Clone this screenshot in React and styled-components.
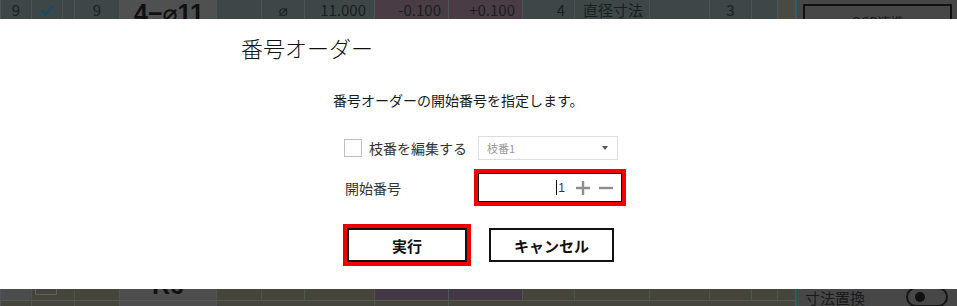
import React from 'react'
import styled, { createGlobalStyle } from 'styled-components'

const GlobalStyle = createGlobalStyle`
	html, body {
		margin: 0;
		padding: 0;
		background: #3e4747;
	}
	body {
		font-family: "Noto Sans CJK JP", "Noto Sans", "DejaVu Sans", sans-serif;
	}
`;

const Page = styled.div`
	width: 957px;
	height: 306px;
	overflow: hidden;
	display: flex;
	flex-direction: column;
`;

/* ---------- dimmed grid behind the dialog ---------- */

const Strip = styled.div`
	display: flex;
	height: ${props => props.$h}px;
	overflow: hidden;
	flex-shrink: 0;
`;

const Table = styled.div`
	display: flex;
	flex-direction: column;
	width: 796px;
	border-left: 1px solid #4f5858;
	box-sizing: border-box;
`;

const Row = styled.div`
	display: flex;
	height: ${props => props.$h}px;
	border-bottom: ${props => props.$line ? '1px solid #565a55' : 'none'};
	box-sizing: border-box;
`;

const Cell = styled.div`
	width: ${props => props.$w}px;
	flex-shrink: 0;
	display: flex;
	align-items: ${props => props.$valign || 'center'};
	justify-content: ${props => props.$align || 'center'};
	padding-left: ${props => props.$left || 0}px;
	padding-right: ${props => props.$right || 0}px;
	box-sizing: border-box;
	background: ${props => props.$bg || '#3e4747'};
	border-right: 1px solid #4d5656;
	color: #172020;
	font-size: 15px;
	line-height: 15px;
	white-space: nowrap;
	overflow: hidden;
`;

const BigText = styled.span`
	font-family: "Liberation Sans", "DejaVu Sans", sans-serif;
	font-weight: 700;
	font-size: 25px;
	line-height: 25px;
	color: #111;
	margin-top: ${props => props.$top || 0}px;
	white-space: nowrap;
`;

const SmallBox = styled.div`
	width: 22px;
	height: 6px;
	margin-left: -14px;
	border: 1px solid #5e605b;
	border-top: none;
	box-sizing: border-box;
	align-self: flex-start;
`;

const Divider = styled.div`
	width: 1px;
	background: #2b5a66;
	flex-shrink: 0;
`;

const SidePanel = styled.div`
	flex: 1;
	background: #474747;
	display: flex;
	align-items: flex-start;
	justify-content: space-between;
	padding: ${props => props.$bottom ? '1px 9px 0 8px' : '4px 4px 0 6px'};
	box-sizing: border-box;
`;

const PanelButton = styled.div`
	width: 149px;
	height: 30px;
	border: 2px solid #111;
	box-sizing: border-box;
	display: flex;
	justify-content: center;
	padding-top: 8px;
	font-size: 13px;
	line-height: 16px;
	color: #1a1a1a;
`;

const PanelLabel = styled.span`
	font-size: 15px;
	line-height: 15px;
	white-space: nowrap;
	color: #1a1a1a;
`;

const Toggle = styled.div`
	width: 42px;
	height: 20px;
	border: 2px solid #151515;
	border-radius: 11px;
	box-sizing: border-box;
	display: flex;
	align-items: center;
	padding-left: 7px;
	margin-top: -3px;

	&::before {
		content: '';
		width: 10px;
		height: 10px;
		border-radius: 50%;
		background: #111;
	}
`;

/* ---------- dialog ---------- */

const Dialog = styled.div`
	height: 270px;
	flex-shrink: 0;
	background: #fff;
	padding: 13px 0 0 241px;
	box-sizing: border-box;
	display: flex;
	flex-direction: column;
	align-items: flex-start;
`;

const Title = styled.h1`
	margin: 0;
	font-size: 22px;
	line-height: 30px;
	font-weight: 300;
	color: #111;
`;

const Message = styled.p`
	margin: 28px 0 0 92px;
	font-size: 14px;
	line-height: 20px;
	color: #1a1a1a;
`;

const Form = styled.div`
	margin: 26px 0 0 103px;
	display: grid;
	grid-template-columns: 134px 148px;
	row-gap: 13px;
	align-items: center;
`;

const CheckLabel = styled.label`
	display: flex;
	align-items: center;
	gap: 7px;
	font-size: 14px;
	color: #333;
`;

const Box = styled.span`
	width: 18px;
	height: 18px;
	border: 1px solid #bdbdbd;
	box-sizing: border-box;
	background: #fff;
`;

const Select = styled.div`
	width: 140px;
	height: 24px;
	border: 1px solid #dedede;
	box-sizing: border-box;
	display: flex;
	align-items: center;
	justify-content: space-between;
	padding: 0 9px 0 8px;
	font-size: 11px;
	color: #9a9a9a;

	&::after {
		content: '';
		border-left: 3px solid transparent;
		border-right: 3px solid transparent;
		border-top: 4px solid #555;
	}
`;

const FieldLabel = styled.span`
	font-size: 14px;
	color: #333;
	padding-left: 1px;
`;

const NumberField = styled.div`
	width: 144px;
	height: 29px;
	border: 1px solid #111;
	outline: 4px solid #ee0000;
	box-sizing: border-box;
	display: flex;
	align-items: center;
	justify-content: flex-end;
	padding-right: 8px;
	gap: 9px;
`;

const Value = styled.span`
	display: flex;
	align-items: center;
	font-family: "Liberation Sans", sans-serif;
	font-size: 12px;
	color: #333;
	margin-right: 2px;

	&::before {
		content: '';
		width: 1px;
		height: 15px;
		background: #111;
		margin-right: 1px;
	}
`;

const Actions = styled.div`
	margin: 26px 0 0 106px;
	display: flex;
	gap: 22px;
`;

const Button = styled.button`
	width: ${props => props.$w}px;
	height: 34px;
	border: 2px solid #111;
	background: #fff;
	outline: ${props => props.$marked ? '4px solid #ee0000' : 'none'};
	font-family: inherit;
	font-size: 15px;
	font-weight: 700;
	color: #111;
	cursor: pointer;
	padding: 0;
`;

const Step = ({ minus }) => (
	<svg width="14" height="14" viewBox="0 0 14 14">
		<path d={minus ? 'M0 7H14' : 'M0 7H14M7 0V14'} stroke="#8d8d8d" strokeWidth="2.4" />
	</svg>
)

const Check = () => (
	<svg width="15" height="12" viewBox="0 0 15 12">
		<path d="M1.5 6.5L5.5 10.5L13.5 1.5" fill="none" stroke="#1d4a66" strokeWidth="2.6" />
	</svg>
)

const cols = [32, 31, 12, 45, 97, 45, 43, 70, 74, 74, 52, 75, 60, 42, 26, 18]

const App = () => {
	return (
		<Page>
			<GlobalStyle />
			<Strip $h={19}>
				<Table>
					<Row $h={19}>
						<Cell $w={cols[0] - 1}>9</Cell>
						<Cell $w={cols[1]}><Check /></Cell>
						<Cell $w={cols[2]} />
						<Cell $w={cols[3]}>9</Cell>
						<Cell $w={cols[4]} $bg="#4f5050" $align="flex-start" $left={14} $valign="flex-start">
							<BigText $top={1}>4−⌀11</BigText>
						</Cell>
						<Cell $w={cols[5]} />
						<Cell $w={cols[6]}>⌀</Cell>
						<Cell $w={cols[7]} $align="flex-end" $right={8}>11.000</Cell>
						<Cell $w={cols[8]} $bg="#4a3c45" $align="flex-end" $right={7}>-0.100</Cell>
						<Cell $w={cols[9]} $bg="#4a3c45" $align="flex-end" $right={7}>+0.100</Cell>
						<Cell $w={cols[10]} $align="flex-end" $right={9}>4</Cell>
						<Cell $w={cols[11]} $align="flex-start" $left={8}>直径寸法</Cell>
						<Cell $w={cols[12]} />
						<Cell $w={cols[13]}>3</Cell>
						<Cell $w={cols[14]} />
						<Cell $w={cols[15]} $bg="#4a4a42" />
					</Row>
				</Table>
				<Divider />
				<SidePanel>
					<PanelButton>OCR連携</PanelButton>
				</SidePanel>
			</Strip>

			<Dialog>
				<Title>番号オーダー</Title>
				<Message>番号オーダーの開始番号を指定します。</Message>
				<Form>
					<CheckLabel>
						<Box />
						枝番を編集する
					</CheckLabel>
					<Select>枝番1</Select>
					<FieldLabel>開始番号</FieldLabel>
					<NumberField>
						<Value>1</Value>
						<Step />
						<Step minus />
					</NumberField>
				</Form>
				<Actions>
					<Button $w={120} $marked>実行</Button>
					<Button $w={125}>キャンセル</Button>
				</Actions>
			</Dialog>

			<Strip $h={17}>
				<Table>
					<Row $h={12} $line>
						<Cell $w={cols[0] - 1} $bg="#4b4d4d" />
						<Cell $w={cols[1] + cols[2]} $bg="#45453b"><SmallBox /></Cell>
						<Cell $w={cols[3]} $bg="#45453b" />
						<Cell $w={cols[4]} $bg="#4e4e4e" $align="flex-start" $left={32} $valign="flex-start">
							<BigText $top={-16}>R6</BigText>
						</Cell>
						<Cell $w={cols[5]} $bg="#45453b" />
						<Cell $w={cols[6]} $bg="#45453b" />
						<Cell $w={cols[7]} $bg="#45453b" />
						<Cell $w={cols[8]} $bg="#433944" />
						<Cell $w={cols[9]} $bg="#433944" />
						<Cell $w={cols[10]} $bg="#45453b" />
						<Cell $w={cols[11]} $bg="#45453b" />
						<Cell $w={cols[12]} $bg="#45453b" />
						<Cell $w={cols[13]} $bg="#45453b" />
						<Cell $w={cols[14]} $bg="#45453b" />
						<Cell $w={cols[15]} $bg="#45453b" />
					</Row>
					<Row $h={5}>
						<Cell $w={cols[0] - 1} $bg="#45453b" />
						<Cell $w={cols[1] + cols[2]} $bg="#45453b" />
						<Cell $w={cols[3]} $bg="#45453b" />
						<Cell $w={cols[4]} $bg="#4e4e4e" />
						<Cell $w={cols[5] + cols[6] + cols[7]} $bg="#45453b" />
						<Cell $w={cols[8]} $bg="#45453b" />
						<Cell $w={cols[9] + cols[10] + cols[11] + cols[12] + cols[13] + cols[14] + cols[15]} $bg="#45453b" />
					</Row>
				</Table>
				<Divider />
				<SidePanel $bottom>
					<PanelLabel>寸法置換</PanelLabel>
					<Toggle />
				</SidePanel>
			</Strip>
		</Page>
	)
}

export default App
